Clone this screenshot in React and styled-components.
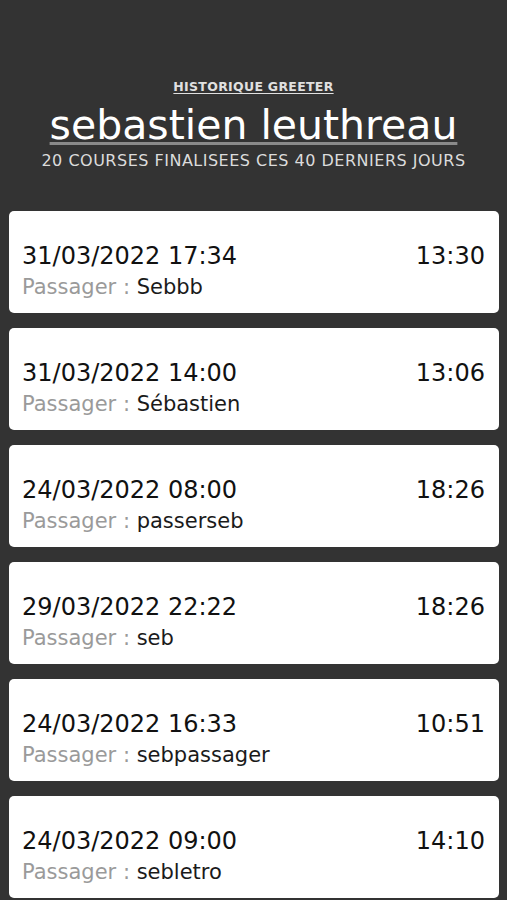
import React from 'react';
import styled, { createGlobalStyle } from 'styled-components';

const GlobalStyle = createGlobalStyle`
  html, body {
    margin: 0;
    padding: 0;
    background: #333333;
  }
  body {
    font-family: "DejaVu Sans", "Liberation Sans", sans-serif;
  }
`;

const rides = [
  { date: '31/03/2022 17:34', time: '13:30', passenger: 'Sebbb' },
  { date: '31/03/2022 14:00', time: '13:06', passenger: 'Sébastien' },
  { date: '24/03/2022 08:00', time: '18:26', passenger: 'passerseb' },
  { date: '29/03/2022 22:22', time: '18:26', passenger: 'seb' },
  { date: '24/03/2022 16:33', time: '10:51', passenger: 'sebpassager' },
  { date: '24/03/2022 09:00', time: '14:10', passenger: 'sebletro' },
];

const Page = styled.div`
  width: 507px;
  height: 900px;
  overflow: hidden;
  background: #333333;
  display: flex;
  flex-direction: column;
`;

const Header = styled.header`
  display: flex;
  flex-direction: column;
  align-items: center;
  padding-top: 79px;
  color: #e6e6e6;
`;

const Kicker = styled.a`
  font-size: 12.5px;
  font-weight: 600;
  letter-spacing: 0.3px;
  color: #e0e0e0;
  text-decoration: underline;
  text-underline-offset: 2px;
  line-height: 16px;
`;

const Name = styled.h1`
  margin: 6px 0 0;
  font-size: 41px;
  font-weight: 400;
  color: #ffffff;
  line-height: 48px;
  text-decoration: underline;
  text-decoration-color: #8a8a8a;
  text-decoration-thickness: 3px;
  text-underline-offset: 3px;
`;

const Subtitle = styled.p`
  margin: 2px 0 0;
  font-size: 16px;
  font-weight: 400;
  letter-spacing: 0.5px;
  color: #dcdcdc;
  text-transform: uppercase;
  line-height: 20px;
`;

const List = styled.div`
  display: flex;
  flex-direction: column;
  gap: 15px;
  padding: 40px 8px 0 9px;
`;

const Card = styled.div`
  background: #ffffff;
  border-radius: 5px;
  height: 102px;
  box-sizing: border-box;
  padding: 30px 14px 0 13px;
  display: flex;
  flex-direction: column;
`;

const Row = styled.div`
  display: flex;
  justify-content: space-between;
  align-items: baseline;
`;

const DateText = styled.span`
  font-size: 24px;
  color: #111111;
  line-height: 30px;
`;

const Passenger = styled.div`
  margin-top: 3px;
  font-size: 21px;
  line-height: 26px;
  color: #1a1a1a;
`;

const Label = styled.span`
  color: #9a9a9a;
`;

export default function App() {
  return (
    <>
      <GlobalStyle />
      <Page>
        <Header>
          <Kicker>HISTORIQUE GREETER</Kicker>
          <Name>sebastien leuthreau</Name>
          <Subtitle>20 courses finalisees ces 40 derniers jours</Subtitle>
        </Header>
        <List>
          {rides.map((r, i) => (
            <Card key={i}>
              <Row>
                <DateText>{r.date}</DateText>
                <DateText>{r.time}</DateText>
              </Row>
              <Passenger>
                <Label>Passager : </Label>
                {r.passenger}
              </Passenger>
            </Card>
          ))}
        </List>
      </Page>
    </>
  );
}
